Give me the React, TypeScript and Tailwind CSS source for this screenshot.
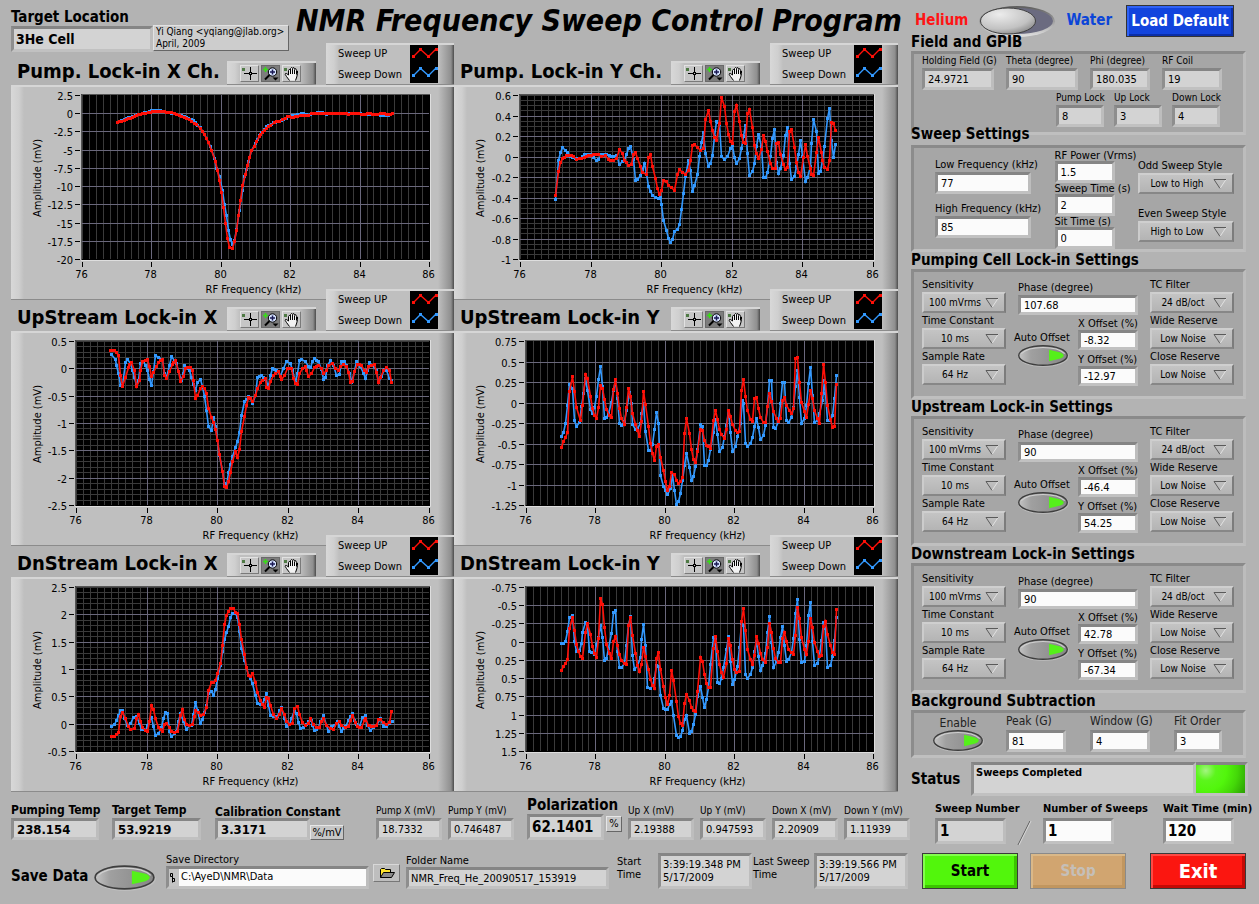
import React, { useId } from "react";
import clsx from "clsx";

const FONT = "font-['DejaVu_Sans_Condensed','DejaVu_Sans',sans-serif]";
const WELL =
    "block border-[3px] border-t-[#858585] border-l-[#8e8e8e] border-r-[#bdbdbd] border-b-[#c1c1c1] text-black outline-none rounded-none";
const PANEL =
    "border-[3px] border-t-[#8a8a8a] border-l-[#8c8c8c] border-r-[#bcbcbc] border-b-[#bfbfbf] bg-[#a6a6a6]";

type FieldProps = {
    label: string;
    value: string;
    className: string;
    labelClass?: string;
    inputClass?: string;
    readOnly?: boolean;
};

const Field = ({
    label,
    value,
    className,
    labelClass = "text-[10px] leading-[14px]",
    inputClass = "h-[22px] text-[11px] px-[3px]",
    readOnly = false,
}: FieldProps) => {
    const id = useId();
    return (
        <div className={clsx("shrink-0", className)}>
            <label htmlFor={id} className={clsx("block whitespace-nowrap", labelClass)}>
                {label}
            </label>
            <input
                id={id}
                defaultValue={value}
                readOnly={readOnly}
                className={clsx(WELL, "w-full", readOnly ? "bg-[#d3d3d3]" : "bg-[#fbfbfb]", inputClass)}
            />
        </div>
    );
};

const Dropdown = ({ label, value, className = "w-[84px]" }: { label: string; value: string; className?: string }) => {
    const id = useId();
    return (
        <div className={className}>
            <label htmlFor={id} className="block whitespace-nowrap text-[11px] leading-[15px]">
                {label}
            </label>
            <div className="relative">
                <select
                    id={id}
                    className="block h-[21px] w-full appearance-none rounded-none border-2 border-t-[#cfcfcf] border-l-[#cccccc] border-r-[#7c7c7c] border-b-[#878787] bg-linear-to-b from-[#c4c4c4] to-[#b4b4b4] pr-[18px] text-center text-[10px] outline-none"
                >
                    <option>{value}</option>
                </select>
                <svg className="pointer-events-none absolute top-[6px] right-[7px]" width="14" height="10" viewBox="0 0 14 10">
                    <path d="M7 9.5L13 .5" stroke="#e2e2e2" fill="none" />
                    <path d="M13 .5H1L7 9.5" stroke="#5a5a5a" fill="none" />
                </svg>
            </div>
        </div>
    );
};

// Oval push button with a lit arrow
const OvalButton = ({ label, className }: { label: string; className: string }) => {
    const id = useId();
    return (
        <button type="button" aria-label={label} className={clsx("block", className)}>
            <svg className="block h-full w-full" viewBox="0 0 60 26" preserveAspectRatio="none">
                <defs>
                    <linearGradient id={id} x1="0" y1="0" x2="1" y2="0">
                        <stop offset="0" stopColor="#c4c4c4" />
                        <stop offset=".25" stopColor="#a0a0a0" />
                        <stop offset="1" stopColor="#868686" />
                    </linearGradient>
                </defs>
                <ellipse cx="30.5" cy="14" rx="29.5" ry="12" fill="#c6c6c6" opacity=".6" />
                <ellipse cx="30" cy="13" rx="28" ry="11" fill={`url(#${id})`} stroke="#3e3e3e" strokeWidth="1.6" />
                <path d="M5 11Q12 4 30 4T55 11" fill="none" stroke="#cfcfcf" strokeWidth="1.2" />
                <path d="M37 6.5L50 9.500q4 1.500 4 3.500t-4 3.500L37 19.500z" fill="#55f01a" />
            </svg>
        </button>
    );
};

const Heading = ({ children, className }: { children: React.ReactNode; className?: string }) => (
    <h2 className={clsx("text-[15px] leading-[17px] font-bold whitespace-nowrap", className)}>{children}</h2>
);

/* ---------- graphs ---------- */

type Graph = {
    title: string;
    left: number; // x of the 76 kHz tick
    right: number;
    ticks: string[];
    minorY: number;
    shift: [number, number];
    up: string;
    down: string;
};

// Traces are kept on a grid three times finer than a pixel.
const graphs: Graph[] = [
    {
        title: "Pump. Lock-in X Ch.",
        left: 71,
        right: 418,
        ticks: ["2.5", "0", "-2.5", "-5", "-7.5", "-10", "-12.5", "-15", "-17.5", "-20"],
        minorY: 1,
        shift: [11, 85],
        up: "352,368 372,361 390,354 408,346 428,341 445,337 465,335 480,334 500,336 515,338 530,342 545,348 560,354 575,364 590,374 600,386 612,402 625,428 635,452 645,485 652,512 659,540 665,577 671,623 677,670 683,715 689,742 697,745 703,724 710,690 716,645 722,600 728,556 737,524 743,495 749,472 755,452 762,438 769,425 777,410 788,396 800,386 812,375 822,366 838,364 848,358 862,350 880,352 900,346 925,346 935,341 975,340 1045,342 1055,340 1090,343 1110,340 1125,344 1140,340 1165,343 1178,341",
        down: "352,366 372,357 390,352 420,342 455,332 480,332 500,336 530,343 560,352 580,362 600,382 620,415 632,440 642,475 650,505 658,530 666,570 672,612 678,645 684,690 690,718 698,733 704,722 710,688 718,630 726,570 734,530 745,485 755,450 765,430 778,407 800,380 820,368 845,362 865,350 885,346 905,340 925,345 945,340 968,336 980,342 1075,340 1100,344 1120,343 1150,346 1165,345 1178,340",
    },
    {
        title: "Pump. Lock-in Y Ch.",
        left: 66,
        right: 419,
        ticks: ["0.6", "0.4", "0.2", "0", "-0.2", "-0.4", "-0.6", "-0.8", "-1"],
        minorY: 4,
        shift: [4, 85],
        up: "316,586 325,514 332,488 338,476 350,466 370,468 380,478 395,474 410,468 430,464 445,464 455,470 465,466 475,478 490,482 500,476 508,448 516,460 524,480 535,496 543,492 550,464 557,458 563,475 570,498 578,518 588,524 596,472 601,464 608,498 616,535 622,566 628,584 634,572 640,542 650,545 656,556 665,562 674,572 682,524 688,508 698,518 707,522 716,512 722,480 728,436 734,433 742,442 750,450 760,444 766,358 775,332 782,364 788,390 794,412 800,422 808,370 814,292 822,320 828,370 834,404 842,425 848,430 854,335 860,316 868,364 875,405 880,427 886,430 892,340 899,328 908,382 914,435 920,460 926,474 933,448 940,406 947,424 953,454 960,490 968,506 975,504 980,430 986,428 992,464 1000,494 1006,509 1013,502 1018,394 1024,388 1034,442 1040,488 1045,516 1052,528 1060,472 1066,434 1073,468 1080,504 1085,522 1091,526 1099,458 1106,412 1113,458 1118,480 1124,502 1133,508 1139,482 1144,368 1151,371 1157,391",
        down: "316,598 325,482 332,457 338,442 345,450 352,458 362,468 375,476 390,474 404,462 420,462 430,472 438,482 445,478 455,464 470,464 485,470 500,466 508,492 516,484 523,478 530,462 536,446 542,440 550,478 557,540 563,537 570,525 578,508 584,490 590,520 596,560 602,575 608,585 616,592 624,596 630,592 635,614 641,660 649,690 655,714 661,727 668,718 674,694 683,688 689,674 695,628 701,580 707,530 715,482 721,510 727,574 734,556 742,522 748,470 755,426 760,398 766,460 775,498 782,490 788,466 794,410 800,364 808,374 814,468 824,478 832,470 842,446 848,436 854,472 860,490 867,474 874,444 880,408 886,376 892,460 898,526 908,514 914,490 920,440 926,404 934,440 941,532 947,532 953,517 960,470 966,415 974,388 980,488 986,520 992,504 1000,466 1006,406 1012,382 1018,490 1024,538 1033,528 1040,500 1045,464 1051,422 1058,470 1066,544 1073,532 1080,500 1085,430 1091,358 1099,394 1106,520 1112,514 1118,480 1124,440 1132,356 1138,325 1144,420 1150,472 1156,433",
    },
    {
        title: "UpStream Lock-in X",
        left: 65,
        right: 418,
        ticks: ["0.5", "0", "-0.5", "-1", "-1.5", "-2", "-2.5"],
        minorY: 5,
        shift: [11, 41],
        up: "332,181 344,182 350,187 356,196 362,255 368,290 376,262 384,232 395,217 402,242 410,289 418,270 422,240 428,215 442,208 448,228 454,260 460,248 468,230 476,216 487,208 493,256 499,266 508,245 516,222 527,210 535,245 542,274 550,258 556,234 570,232 576,240 580,270 587,325 593,316 601,294 608,290 614,296 620,311 626,355 634,382 641,396 647,418 653,452 659,494 667,545 674,590 680,593 686,574 692,548 698,514 706,485 713,502 719,478 725,425 733,380 740,346 746,322 752,326 758,335 766,316 772,295 780,276 795,266 800,292 806,296 812,275 820,256 834,245 840,258 845,268 852,256 862,236 875,234 880,265 886,280 892,283 898,250 906,235 915,228 920,240 926,260 934,250 942,232 955,225 964,236 971,251 978,240 986,225 996,220 1006,234 1014,242 1022,230 1030,224 1040,228 1046,248 1052,277 1058,274 1064,245 1072,224 1085,225 1092,242 1098,248 1106,228 1122,224 1130,248 1136,277 1142,262 1150,240 1160,232 1168,240 1174,277",
        down: "335,193 345,208 350,225 356,250 362,286 368,285 376,218 383,208 390,220 398,242 404,262 410,285 416,270 422,220 430,215 436,225 442,240 448,268 454,286 460,245 466,196 476,203 486,208 492,250 499,262 508,225 515,199 524,210 530,220 536,245 544,270 550,250 554,227 562,235 568,242 574,262 580,282 586,302 592,278 601,268 607,290 613,318 619,362 626,410 634,422 640,382 647,410 652,452 658,495 666,545 673,580 680,588 686,548 692,523 698,500 706,473 712,455 718,428 724,376 734,335 745,320 750,325 757,341 766,316 772,262 784,256 795,268 804,288 811,256 818,236 830,240 840,255 850,236 860,214 870,220 878,240 886,278 892,250 898,212 905,208 915,214 925,230 932,232 938,215 944,205 955,215 963,238 971,268 977,262 983,225 990,211 1000,226 1010,256 1018,252 1025,214 1033,214 1040,225 1048,250 1055,276 1062,245 1070,214 1080,228 1090,250 1096,265 1102,240 1108,217 1118,225 1128,240 1136,276 1144,260 1152,238 1160,240 1168,265 1174,270",
    },
    {
        title: "UpStream Lock-in Y",
        left: 72,
        right: 419,
        ticks: ["0.75", "0.5", "0.25", "0", "-0.25", "-0.5", "-0.75", "-1", "-1.25"],
        minorY: 1,
        shift: [4, 41],
        up: "335,472 341,455 347,442 353,427 358,305 367,260 374,305 380,352 390,390 398,345 406,254 413,266 420,320 426,356 432,375 438,386 445,352 452,286 458,296 464,328 470,358 477,376 485,382 490,298 497,268 503,310 508,356 515,386 524,402 530,352 536,296 542,318 548,370 555,402 562,422 569,440 574,395 581,305 587,342 594,410 601,460 608,490 614,511 620,470 626,464 632,503 640,542 646,575 652,601 658,590 665,548 672,554 680,570 686,580 692,574 698,563 704,430 710,386 718,430 725,478 731,508 737,518 743,485 752,418 758,422 764,450 770,466 782,475 790,392 797,362 803,388 809,418 815,432 822,445 830,418 836,362 842,378 848,402 855,422 862,428 869,424 875,300 881,268 887,320 893,362 900,388 908,395 914,325 920,323 926,355 932,382 940,398 947,398 953,350 959,310 965,333 971,365 978,385 986,395 992,385 998,330 1004,322 1010,345 1018,360 1025,370 1031,354 1037,205 1043,202 1048,278 1055,338 1062,365 1070,382 1075,342 1082,302 1088,326 1094,362 1102,385 1108,400 1114,310 1121,224 1127,278 1133,345 1142,388 1148,412 1154,409 1160,284",
        down: "335,440 341,427 347,400 352,347 358,284 366,296 374,392 380,409 388,398 395,350 400,310 406,264 412,300 420,358 426,370 433,352 438,320 445,268 452,230 458,290 464,384 470,383 476,370 484,338 490,300 496,270 502,325 508,400 515,405 523,395 530,362 537,308 543,340 548,404 555,418 562,415 570,400 575,370 580,340 586,425 594,480 602,480 607,462 613,418 620,368 626,400 632,555 640,590 646,602 652,612 660,595 666,552 672,600 680,643 686,635 692,610 698,572 704,527 710,490 718,532 725,572 731,560 737,528 743,478 752,404 758,410 764,526 770,526 776,512 782,478 790,428 797,388 803,432 809,485 816,472 823,440 830,405 835,362 842,428 848,485 855,470 862,440 870,400 876,330 881,340 886,460 892,470 900,460 908,442 914,410 920,384 926,412 932,448 940,435 947,405 953,348 959,270 965,272 971,412 977,414 985,395 992,340 998,278 1004,278 1010,390 1016,397 1025,382 1031,352 1036,290 1042,240 1048,322 1055,400 1062,385 1070,345 1075,280 1081,232 1087,315 1094,397 1102,392 1108,370 1116,330 1122,270 1127,310 1133,392 1142,392 1148,375 1154,325 1160,256",
    },
    {
        title: "DnStream Lock-in X",
        left: 65,
        right: 418,
        ticks: ["2.5", "2", "1.5", "1", "0.5", "0", "-0.5"],
        minorY: 5,
        shift: [11, 32],
        up: "335,574 344,574 350,568 356,562 362,515 368,503 376,520 384,545 392,553 402,550 408,520 414,508 420,530 427,548 436,556 442,558 448,530 454,482 460,492 467,520 476,548 488,558 493,538 500,534 508,548 515,558 524,562 532,558 540,510 547,494 554,522 560,538 568,542 576,538 582,515 587,496 594,502 601,512 610,508 619,488 626,437 634,412 641,412 647,406 653,385 660,354 667,300 674,238 680,210 686,198 692,190 700,190 706,202 712,206 718,238 725,284 732,328 740,366 746,390 752,394 758,385 766,412 772,442 780,465 787,478 793,487 800,456 806,460 812,482 820,508 830,520 838,508 845,490 852,508 860,530 868,538 876,535 882,490 892,485 898,508 906,532 915,542 925,535 932,520 940,538 950,548 958,548 965,530 970,520 980,542 990,550 1000,552 1008,535 1018,530 1025,542 1035,548 1045,545 1052,525 1058,512 1065,532 1072,545 1085,548 1092,525 1097,520 1104,540 1115,545 1128,542 1135,522 1142,522 1150,532 1160,538 1168,532 1175,500",
        down: "335,544 344,538 350,525 356,510 362,496 368,496 374,520 382,542 390,535 400,516 410,515 418,535 425,552 436,555 442,540 454,516 460,545 467,571 476,565 484,548 490,520 497,502 502,505 508,560 515,574 523,565 530,560 536,530 542,505 550,530 558,552 568,542 574,540 580,508 587,473 593,495 601,534 608,522 614,502 620,480 626,445 634,440 641,451 647,432 653,400 660,360 668,320 674,284 680,262 686,244 692,218 698,206 705,204 712,218 718,260 725,310 732,345 740,368 746,392 752,400 758,415 766,450 772,475 780,478 787,475 793,462 800,446 806,480 812,512 820,515 832,515 838,496 845,488 852,520 860,544 868,538 874,520 882,495 890,505 896,532 902,550 910,548 918,538 925,530 933,525 938,540 944,556 955,548 962,530 970,511 978,540 985,558 995,545 1002,540 1012,530 1024,558 1035,545 1045,525 1057,504 1064,525 1070,538 1078,545 1088,518 1096,511 1102,540 1110,556 1120,548 1130,542 1140,520 1150,545 1158,545 1168,535 1176,530",
    },
    {
        title: "DnStream Lock-in Y",
        left: 72,
        right: 419,
        ticks: ["-0.75", "-0.5", "-0.25", "0", "0.25", "0.5", "0.75", "1", "1.25", "1.5"],
        minorY: 1,
        shift: [4, 32],
        up: "335,376 341,364 347,355 353,343 359,250 367,217 374,255 380,298 386,320 392,335 398,341 406,262 413,236 420,268 426,304 432,325 438,337 445,280 452,160 458,178 464,246 470,298 477,325 485,340 490,290 497,274 503,300 509,328 515,346 524,356 530,358 536,240 542,217 548,270 555,325 562,362 568,379 575,358 581,308 587,334 594,374 602,403 608,420 614,430 620,340 626,322 632,372 640,425 646,458 652,479 658,450 665,376 671,406 680,470 686,515 692,536 698,541 704,475 710,448 718,466 725,487 731,496 737,499 743,440 752,338 758,350 764,388 770,415 776,427 782,427 790,310 797,275 803,318 809,357 815,382 821,396 829,355 836,280 842,300 848,343 854,372 860,382 869,379 875,230 881,190 887,256 893,312 900,343 908,358 914,330 920,275 926,296 932,326 938,343 947,352 953,308 959,236 965,262 971,310 977,340 985,352 992,352 998,280 1004,262 1010,290 1016,314 1024,322 1031,328 1037,270 1043,188 1048,220 1055,276 1062,312 1069,328 1076,288 1082,220 1088,246 1094,292 1103,319 1109,335 1115,331 1121,245 1127,230 1133,268 1142,302 1148,322 1154,328 1160,193",
        down: "335,296 341,296 347,288 353,260 359,217 367,212 374,290 380,320 388,315 393,295 398,262 406,233 412,240 418,318 425,322 432,328 438,298 445,278 452,240 458,278 464,346 470,340 476,310 484,265 490,202 496,196 502,320 508,366 515,366 524,355 530,300 536,240 542,215 548,330 554,373 562,360 570,338 575,282 581,238 587,300 593,427 602,430 608,422 614,400 620,362 626,365 632,450 640,490 646,493 652,493 658,478 665,468 671,512 680,571 686,577 692,574 698,556 704,522 710,512 718,565 724,560 731,538 737,508 743,455 752,425 758,458 764,488 770,462 776,428 782,358 790,278 797,280 803,412 809,414 815,400 821,368 829,312 836,274 842,350 848,418 854,403 862,365 868,308 875,235 881,240 887,388 893,400 900,388 908,368 914,320 920,290 926,335 932,376 938,361 947,325 953,262 959,214 965,292 971,367 978,350 985,322 992,278 998,244 1004,300 1010,348 1016,343 1024,322 1031,280 1036,205 1043,163 1048,283 1055,352 1062,348 1070,300 1076,212 1082,172 1088,290 1094,362 1103,355 1109,330 1115,285 1121,232 1127,250 1133,367 1142,361 1148,334 1154,285 1160,216",
    },
];

const STEP = 7;

const samples = (trace: string, [dx, dy]: [number, number]) => {
    const raw = trace.split(" ").map((p) => p.split(",").map(Number));
    const out: number[][] = [raw[0]];
    for (let i = 1; i < raw.length; i++) {
        const [x0, y0] = raw[i - 1];
        const [x1, y1] = raw[i];
        const n = Math.max(1, Math.round((x1 - x0) / STEP));
        for (let k = 1; k <= n; k++) {
            out.push([x0 + ((x1 - x0) * k) / n, y0 + ((y1 - y0) * k) / n]);
        }
    }
    return out.map(([x, y]) => [Math.floor(x / 3 - dx) + 0.5, Math.floor(y / 3 - dy) + 0.5]);
};

const Trace = ({ trace, shift, color }: { trace: string; shift: [number, number]; color: string }) => {
    const pts = samples(trace, shift);
    return (
        <g>
            <polyline points={pts.map((p) => p.join(",")).join(" ")} fill="none" stroke={color} strokeWidth="1.6" />
            {pts.map(([x, y], i) => (
                <rect key={i} x={x - 1.5} y={y - 1.5} width="3" height="3" fill={color} />
            ))}
        </g>
    );
};

const TOP = 10;
const BOTTOM = 174;

const Plot = ({ graph }: { graph: Graph }) => {
    const { left, right, ticks, minorY, shift } = graph;
    const px = (i: number, n: number) => Math.round(left + ((right - left) * i) / n) + 0.5;
    const py = (i: number, n: number) => Math.round(TOP + ((BOTTOM - TOP) * i) / n) + 0.5;
    const rows = ticks.length - 1;

    return (
        <svg width="430" height="211" viewBox="0 2 430 211" className="block max-w-full text-[11px]" role="img" aria-label={graph.title}>
            <rect x={left - 1} y={TOP - 1} width={right - left + 2} height={BOTTOM - TOP + 2} fill="#000" />
            <g stroke="#3a3a3a" strokeWidth="1">
                {Array.from({ length: 50 }, (_, i) => (
                    <path key={i} d={`M${px(i, 50)} ${TOP}V${BOTTOM}`} />
                ))}
                {minorY > 1 &&
                    Array.from({ length: rows * minorY }, (_, i) => (
                        <path key={i} d={`M${left} ${py(i, rows * minorY)}H${right}`} />
                    ))}
            </g>
            <g stroke="#6a687c" strokeWidth="1">
                {[1, 2, 3, 4].map((i) => (
                    <path key={i} d={`M${px(i, 5)} ${TOP}V${BOTTOM}`} />
                ))}
                {ticks.slice(1, -1).map((t, i) => (
                    <path key={t} d={`M${left} ${py(i + 1, rows)}H${right}`} />
                ))}
            </g>
            <path d={`M${left - 1} ${BOTTOM + 1.5}H${right + 1.5}V${TOP - 1}`} stroke="#dedede" fill="none" />
            <path d={`M${left - 0.5} ${BOTTOM + 1}V${TOP - 0.5}H${right + 1}`} stroke="#555" fill="none" />
            {ticks.map((t, i) => (
                <g key={t}>
                    <path d={`M${left - 7} ${py(i, rows)}h5`} stroke="#000" />
                    <text x={left - 9} y={py(i, rows) + 4} textAnchor="end">
                        {t}
                    </text>
                </g>
            ))}
            {["76", "78", "80", "82", "84", "86"].map((t, i) => (
                <g key={t}>
                    <path d={`M${px(i, 5)} ${BOTTOM + 3}v5`} stroke="#000" />
                    <text x={px(i, 5) - 1} y={BOTTOM + 19} textAnchor="middle">
                        {t}
                    </text>
                </g>
            ))}
            <text x={(left + right) / 2 - 2} y={208} textAnchor="middle">
                RF Frequency (kHz)
            </text>
            <text x="0" y="0" textAnchor="middle" transform="translate(30 93) rotate(-90)">
                Amplitude (mV)
            </text>
            <Trace trace={graph.down} shift={shift} color="#3399ff" />
            <Trace trace={graph.up} shift={shift} color="#ff1008" />
        </svg>
    );
};

const BEVEL =
    "bg-[linear-gradient(90deg,#d8d8d8_0,#cfcfcf_8px,#bfbfbf_13px,#bfbfbf_calc(100%-16px),#8f8f8f_calc(100%-3px),#4c4c4c_100%)] border-t-2 border-b border-t-[#d6d6d6] border-b-[#8b8b8b]";

const ToolButton = ({ label, pressed, children }: { label: string; pressed?: boolean; children: React.ReactNode }) => (
    <button
        type="button"
        aria-label={label}
        className={clsx(
            "block h-[17px] w-[19px] border",
            pressed
                ? "border-[#6a6a6a] bg-[#7d7d7d]"
                : "border-t-[#e2e2e2] border-l-[#e2e2e2] border-r-[#7a7a7a] border-b-[#7a7a7a] bg-[#c6c6c6]",
        )}
    >
        <svg width="17" height="15" viewBox="0 0 17 15" className="block">
            {children}
        </svg>
    </button>
);

const GraphTools = () => (
    <div className={clsx("flex h-[24px] w-[89px] items-center gap-[2px] pl-[13px]", BEVEL)}>
        <ToolButton label="Cursor">
            <rect x="1" y="2" width="3" height="3" fill="#4f7a45" />
            <path d="M3 7.5h13M9.5 1v13" stroke="#000" />
            <rect x="8.5" y="6.5" width="2" height="2" fill="#c6c6c6" stroke="#000" />
        </ToolButton>
        <ToolButton label="Zoom" pressed>
            <path d="M3.5 1v5M1 3.5h5" stroke="#35e013" strokeWidth="1.5" />
            <circle cx="10.5" cy="6" r="4.2" fill="#d5e2ff" stroke="#000" />
            <path d="M10.5 3.5v5M8 6h5" stroke="#1a1a55" strokeWidth="1.5" />
            <path d="M7.5 9L3 13.5" stroke="#000" strokeWidth="2" />
            <path d="M10.5 11.5h6l-3 3z" fill="#000" />
        </ToolButton>
        <ToolButton label="Pan">
            <rect x="1" y="2" width="3" height="3" fill="#4f7a45" />
            <path
                d="M6.5 14.5L3.500 10.5Q1.5 8 2.5 7.5T5.500 9V4.5Q6 2.5 7.5 4V2.5Q8.500 .5 9.5 2.5V2Q11 .5 11.5 3Q13 1.5 13.5 4.5Q15 4 14.5 7.5T12.5 14.5"
                fill="#f2f2f2"
                stroke="#000"
            />
            <path d="M7.5 4v4M9.5 3v5M11.5 3.5v4.5M13.5 5v3.5" stroke="#000" />
        </ToolButton>
    </div>
);

const LegendLine = ({ color }: { color: string }) => (
    <svg width="28" height="19" viewBox="0 0 28 19" className="block bg-black">
        <path d="M3.5 11.5L10.5 4.5L18.5 11.5L26 4" fill="none" stroke={color} strokeWidth="1.3" />
        {[
            [3, 11],
            [10, 4],
            [18, 11],
            [26, 4],
        ].map(([x, y]) => (
            <rect key={x} x={x - 1} y={y - 1} width="3" height="3" fill={color} />
        ))}
    </svg>
);

const GraphPanel = ({ graph, raised }: { graph: Graph; raised: boolean }) => (
    <section className={clsx("min-w-0", raised && "-mt-[11px]")}>
        <header className="flex h-[42px] items-end">
            <h2 className="mb-[2px] ml-[6px] flex-1 text-[20px] leading-[24px] font-bold whitespace-nowrap">{graph.title}</h2>
            <GraphTools />
            <div className={clsx("ml-[10px] flex h-[42px] w-[128px] justify-between pr-[16px] pl-[12px] text-[11px]", BEVEL)}>
                <div>
                    <p className="leading-[18px]">Sweep UP</p>
                    <p className="mt-[2px] leading-[20px]">Sweep Down</p>
                </div>
                <div>
                    <LegendLine color="#ff1008" />
                    <LegendLine color="#3399ff" />
                </div>
            </div>
        </header>
        <div className={clsx("h-[215px]", BEVEL)}>
            <Plot graph={graph} />
        </div>
    </section>
);

/* ---------- settings ---------- */

const LABEL_15 = "text-[11px] leading-[15px]";
const LABEL_12 = "text-[11px] leading-[12px]";
const LABEL_11 = "text-[11px] leading-[11px]";
const LABEL_LARGE = "text-[12px] leading-[17px]";
const SHORT_INPUT = "h-[20px] text-[11px] px-[3px]";

const LockIn = ({ title, phase, x, y }: { title: string; phase: string; x: string; y: string }) => (
    <section>
        <Heading>{title}</Heading>
        <div className={clsx("flex h-[130px] justify-between pt-[5px] pr-[9px] pl-[8px]", PANEL)}>
            <div>
                <Dropdown label="Sensitivity" value="100 mVrms" />
                <Dropdown label="Time Constant" value="10 ms" />
                <Dropdown label="Sample Rate" value="64 Hz" />
            </div>
            <div className="w-[132px] px-[6px] pt-[3px]">
                <Field label="Phase (degree)" value={phase} className="w-full" labelClass={LABEL_15} inputClass={SHORT_INPUT} />
                <div className="mt-[3px] flex justify-between">
                    <div className="mt-[13px] -ml-[4px] w-[60px]">
                        <p className="text-[11px] leading-[13px] whitespace-nowrap">Auto Offset</p>
                        <OvalButton label="Auto Offset" className="ml-[3px] h-[23px] w-[52px]" />
                    </div>
                    <div className="w-[60px] space-y-[4px]">
                        <Field label="X Offset (%)" value={x} className="w-full" labelClass={LABEL_12} inputClass={SHORT_INPUT} />
                        <Field label="Y Offset (%)" value={y} className="w-full" labelClass={LABEL_12} inputClass={SHORT_INPUT} />
                    </div>
                </div>
            </div>
            <div>
                <Dropdown label="TC Filter" value="24 dB/oct" />
                <Dropdown label="Wide Reserve" value="Low Noise" />
                <Dropdown label="Close Reserve" value="Low Noise" />
            </div>
        </div>
    </section>
);

const SpeciesSwitch = () => (
    <button type="button" role="switch" aria-checked="false" aria-label="Helium or Water" className="mx-[10px]">
        <svg width="78" height="33" viewBox="0 0 78 33" className="block">
            <defs>
                <linearGradient id="rim" x1="0" y1="0" x2="0" y2="1">
                    <stop offset="0" stopColor="#5c5c5c" />
                    <stop offset="1" stopColor="#e2e2e2" />
                </linearGradient>
                <radialGradient id="knob" cx=".35" cy=".25" r=".8">
                    <stop offset="0" stopColor="#ececec" />
                    <stop offset=".7" stopColor="#c2c2c2" />
                    <stop offset="1" stopColor="#8c8c8c" />
                </radialGradient>
            </defs>
            <ellipse cx="39" cy="16.5" rx="38" ry="15.5" fill="url(#rim)" />
            <ellipse cx="39" cy="16" rx="36" ry="13" fill="#6b6b80" />
            <ellipse cx="30" cy="16" rx="27.5" ry="13" fill="url(#knob)" stroke="#404040" />
        </svg>
    </button>
);

const BIG_LABEL = "text-[11px] leading-[14px] font-bold mb-[2px]";
const BIG_INPUT = "h-[26px] text-[15px] px-[2px] font-bold";

const Settings = () => {
    const statusId = useId();
    return (
        <aside className="w-[335px] shrink-0">
            <div className="flex h-[34px] items-start pt-[5px] pl-[4px] text-[15px] font-bold">
                <span className="mt-[4px] leading-[22px] text-[#ff1414]">Helium</span>
                <SpeciesSwitch />
                <span className="mt-[4px] leading-[22px] text-[#0b45d8]">Water</span>
                <button
                    type="button"
                    className="mr-[12px] ml-auto h-[32px] w-[108px] border border-[#333] bg-[#1244dd] text-[15px] font-bold whitespace-nowrap text-white shadow-[inset_2px_2px_0_#2f62f5,inset_-2px_-2px_0_#0a2ea8]"
                >
                    Load Default
                </button>
            </div>

            <Heading>Field and GPIB</Heading>
            <div className={clsx("h-[84px] pl-[8px]", PANEL)}>
                <div className="flex gap-[12px]">
                    <Field readOnly label="Holding Field (G)" value="24.9721" className="w-[72px]" />
                    <Field readOnly label="Theta (degree)" value="90" className="w-[72px]" />
                    <Field readOnly label="Phi (degree)" value="180.035" className="w-[60px]" />
                    <Field readOnly label="RF Coil" value="19" className="w-[60px]" />
                </div>
                <div className="flex gap-[10px] pt-px pl-[134px]">
                    <Field readOnly label="Pump Lock" value="8" className="w-[48px]" />
                    <Field readOnly label="Up Lock" value="3" className="w-[48px]" />
                    <Field readOnly label="Down Lock" value="4" className="w-[48px]" />
                </div>
            </div>

            <Heading className="relative -mt-[9px] mb-[2px]">Sweep Settings</Heading>
            <div className={clsx("flex h-[107px] justify-between pr-[9px] pl-[21px]", PANEL)}>
                <div className="w-[96px] space-y-[7px] pt-[9px]">
                    <Field label="Low Frequency (kHz)" value="77" className="w-full" labelClass={LABEL_15} />
                    <Field label="High Frequency (kHz)" value="85" className="w-full" labelClass={LABEL_15} />
                </div>
                <div className="w-[60px] pt-[2px]">
                    <Field label="RF Power (Vrms)" value="1.5" className="w-full" labelClass={LABEL_11} />
                    <Field label="Sweep Time (s)" value="2" className="w-full" labelClass={LABEL_11} />
                    <Field label="Sit Time (s)" value="0" className="w-full" labelClass={LABEL_11} />
                </div>
                <div className="space-y-[12px] pt-[10px]">
                    <Dropdown label="Odd Sweep Style" value="Low to High" className="w-[96px]" />
                    <Dropdown label="Even Sweep Style" value="High to Low" className="w-[96px]" />
                </div>
            </div>

            <LockIn title="Pumping Cell Lock-in Settings" phase="107.68" x="-8.32" y="-12.97" />
            <LockIn title="Upstream Lock-in Settings" phase="90" x="-46.4" y="54.25" />
            <LockIn title="Downstream Lock-in Settings" phase="90" x="42.78" y="-67.34" />

            <Heading>Background Subtraction</Heading>
            <div className={clsx("flex h-[48px] pl-[18px] text-[#222]", PANEL)}>
                <div className="w-[52px] pt-[5px]">
                    <p className="text-center text-[12px] leading-[11px]">Enable</p>
                    <OvalButton label="Enable" className="h-[23px] w-[52px]" />
                </div>
                <Field label="Peak (G)" value="81" className="ml-[22px] w-[60px]" labelClass={LABEL_LARGE} />
                <Field label="Window (G)" value="4" className="ml-[24px] w-[60px]" labelClass={LABEL_LARGE} />
                <Field label="Fit Order" value="3" className="ml-[24px] w-[48px]" labelClass={LABEL_LARGE} />
            </div>

            <div className="mt-[4px] -mr-[2px] flex items-center">
                <label htmlFor={statusId} className="w-[60px] text-[15px] font-bold">
                    Status
                </label>
                <textarea
                    id={statusId}
                    readOnly
                    defaultValue="Sweeps Completed"
                    className={clsx(WELL, "h-[34px] min-w-0 flex-1 resize-none bg-[#d3d3d3] px-[2px] text-[11px] leading-[16px] font-bold")}
                />
                <div
                    className={clsx(
                        WELL,
                        "h-[34px] w-[52px] border-l-0 bg-[radial-gradient(circle_at_20%_20%,#a4f582_0,#5cf51c_22%,#52f60c_45%,#44d808_70%,#2a9d02_100%)]",
                    )}
                />
            </div>

            <div className="mt-[6px] flex pl-[24px]">
                <Field readOnly label="Sweep Number" value="1" className="w-[71px]" labelClass={BIG_LABEL} inputClass={BIG_INPUT} />
                <svg width="37" height="28" viewBox="0 0 37 28" className="mt-[16px] block shrink-0">
                    <path d="M12 27L24 3" stroke="#555" />
                    <path d="M13 27L25 3" stroke="#d8d8d8" />
                </svg>
                <Field label="Number of Sweeps" value="1" className="w-[71px]" labelClass={BIG_LABEL} inputClass={BIG_INPUT} />
                <Field label="Wait Time (min)" value="120" className="ml-[49px] w-[71px]" labelClass={BIG_LABEL} inputClass={BIG_INPUT} />
            </div>

            <div className="mt-[7px] flex pl-[11px] font-bold">
                <button
                    type="button"
                    className="h-[36px] w-[96px] border border-[#3a3a3a] bg-[#52f60c] text-[15px] shadow-[inset_2px_2px_0_#83ff4d,inset_-3px_-3px_0_#3bc400]"
                >
                    Start
                </button>
                <button
                    type="button"
                    disabled
                    className="ml-[12px] h-[36px] w-[96px] border border-[#8a8a8a] bg-[#d1a570] text-[15px] text-[#c5bfb8] shadow-[inset_2px_2px_0_#dab888,inset_-3px_-3px_0_#c1965f]"
                >
                    Stop
                </button>
                <button
                    type="button"
                    className="ml-[24px] h-[36px] w-[96px] border border-[#3a3a3a] bg-[#fb1610] text-[20px] text-white shadow-[inset_2px_2px_0_#ff4a44,inset_-3px_-3px_0_#c40a05]"
                >
                    Exit
                </button>
            </div>
        </aside>
    );
};

/* ---------- read-outs below the graphs ---------- */

const BOLD_LABEL = "text-[12px] leading-[16px] font-bold";
const BOLD_INPUT = "h-[22px] text-[13px] px-[3px] font-bold";
const UNIT =
    "border border-t-[#e6e6e6] border-l-[#e6e6e6] border-r-[#666] border-b-[#666] bg-[#c6c6c6] text-center text-[11px]";

const Readouts = () => (
    <div className="mt-[5px] flex h-[43px] items-end">
        <Field readOnly label="Pumping Temp" value="238.154" className="w-[88px]" labelClass={BOLD_LABEL} inputClass={BOLD_INPUT} />
        <Field readOnly label="Target Temp" value="53.9219" className="ml-[13px] w-[89px]" labelClass={BOLD_LABEL} inputClass={BOLD_INPUT} />
        <Field
            readOnly
            label="Calibration Constant"
            value="3.3171"
            className="ml-[14px] w-[95px]"
            labelClass="text-[12px] leading-[11px] font-bold"
            inputClass={BOLD_INPUT}
        />
        <span className={clsx("h-[15px] w-[34px] leading-[13px]", UNIT)}>%/mV</span>
        <Field readOnly label="Pump X (mV)" value="18.7332" className="ml-[32px] w-[66px]" />
        <Field readOnly label="Pump Y (mV)" value="0.746487" className="ml-[6px] w-[66px]" />
        <Field
            readOnly
            label="Polarization"
            value="62.1401"
            className="ml-[13px] w-[77px]"
            labelClass="text-[15px] leading-[17px] font-bold"
            inputClass={BIG_INPUT}
        />
        <span className={clsx("mb-[8px] ml-[2px] h-[16px] w-[16px] leading-[14px]", UNIT)}>%</span>
        <Field readOnly label="Up X (mV)" value="2.19388" className="ml-[6px] w-[66px]" />
        <Field readOnly label="Up Y (mV)" value="0.947593" className="ml-[6px] w-[66px]" />
        <Field readOnly label="Down X (mV)" value="2.20909" className="ml-[6px] w-[66px]" />
        <Field readOnly label="Down Y (mV)" value="1.11939" className="ml-[6px] w-[66px]" />
    </div>
);

const TIME_BOX = "h-[36px] w-[94px] bg-[#d3d3d3] pt-[2px] pl-[2px] text-[11px] leading-[13px] whitespace-nowrap";

const SaveBar = () => (
    <div className="mt-[13px] flex h-[36px] items-end">
        <span className="mb-[4px] w-[82px] text-[15px] leading-[18px] font-bold whitespace-nowrap">Save Data</span>
        <OvalButton label="Save Data" className="-mb-[2px] h-[27px] w-[63px]" />
        <div className="ml-[10px] w-[203px]">
            <label htmlFor="save-dir" className="block text-[11px] leading-[13px]">
                Save Directory
            </label>
            <div className={clsx(WELL, "flex h-[23px] items-stretch bg-[#fbfbfb]")}>
                <span className="flex w-[10px] items-center bg-[#c4c4c4]">
                    <svg width="8" height="12" viewBox="0 0 8 12">
                        <path d="M1.5 1.5h2v3h-2zM3.5 4.500v6M3.5 6.5h2v3h-2" fill="none" stroke="#000" />
                    </svg>
                </span>
                <input id="save-dir" defaultValue="C:\AyeD\NMR\Data" className="min-w-0 flex-1 px-[2px] text-[11px] outline-none" />
            </div>
        </div>
        <button
            type="button"
            aria-label="Browse"
            className="mb-[7px] ml-[4px] flex h-[18px] w-[27px] items-center justify-center border border-t-[#d8d8d8] border-l-[#d8d8d8] border-r-[#777] border-b-[#777] bg-[#bebebe]"
        >
            <svg width="16" height="12" viewBox="0 0 16 12">
                <path d="M1.5 10.5v-8l1-1h3l1 1h5v3" fill="#ffe52e" stroke="#000" />
                <path d="M1.5 10.5L4.5 5.5h11l-3 5z" fill="#8a8a8a" stroke="#000" />
            </svg>
        </button>
        <Field
            readOnly
            label="Folder Name"
            value="NMR_Freq_He_20090517_153919"
            className="ml-[6px] w-[203px]"
            labelClass={LABEL_12}
            inputClass="h-[22px] text-[11px] leading-[16px] px-[2px]"
        />
        <span className="ml-[8px] w-[41px] self-start pt-[2px] text-[11px] leading-[13px]">
            Start
            <br />
            Time
        </span>
        <output className={clsx(WELL, TIME_BOX)}>
            3:39:19.348 PM
            <br />
            5/17/2009
        </output>
        <span className="ml-px w-[61px] self-start pt-[2px] text-[11px] leading-[13px]">
            Last Sweep
            <br />
            Time
        </span>
        <output className={clsx(WELL, TIME_BOX)}>
            3:39:19.566 PM
            <br />
            5/17/2009
        </output>
    </div>
);

export default function App() {
    return (
        <div className={clsx("flex min-h-screen w-full bg-[#b3b3b3] pr-[13px] pl-[11px] text-black", FONT)}>
            <main className="min-w-0 flex-1">
                <div className="flex h-[43px] items-start">
                    <Field
                        readOnly
                        label="Target Location"
                        value="3He Cell"
                        className="mt-[9px] w-[142px]"
                        labelClass="text-[15px] leading-[17px] font-bold"
                        inputClass="h-[26px] text-[14px] px-[2px] font-bold"
                    />
                    <p className="mt-[25px] h-[26px] w-[136px] shrink-0 border border-t-[#e2e2e2] border-l-[#e2e2e2] border-r-[#666] border-b-[#666] bg-[#cdcdcd] pl-[2px] text-[10px] leading-[12px] whitespace-nowrap">
                        Yi Qiang &lt;yqiang@jlab.org&gt;
                        <br />
                        April, 2009
                    </p>
                    <h1 className="mt-[2px] ml-[7px] text-[30px] leading-[38px] font-bold whitespace-nowrap italic">
                        NMR Frequency Sweep Control Program
                    </h1>
                </div>
                <div className="grid grid-cols-[443fr_444fr] pr-[13px]">
                    {graphs.map((graph, i) => (
                        <GraphPanel key={graph.title} graph={graph} raised={i > 1} />
                    ))}
                </div>
                <Readouts />
                <SaveBar />
            </main>
            <Settings />
        </div>
    );
}
